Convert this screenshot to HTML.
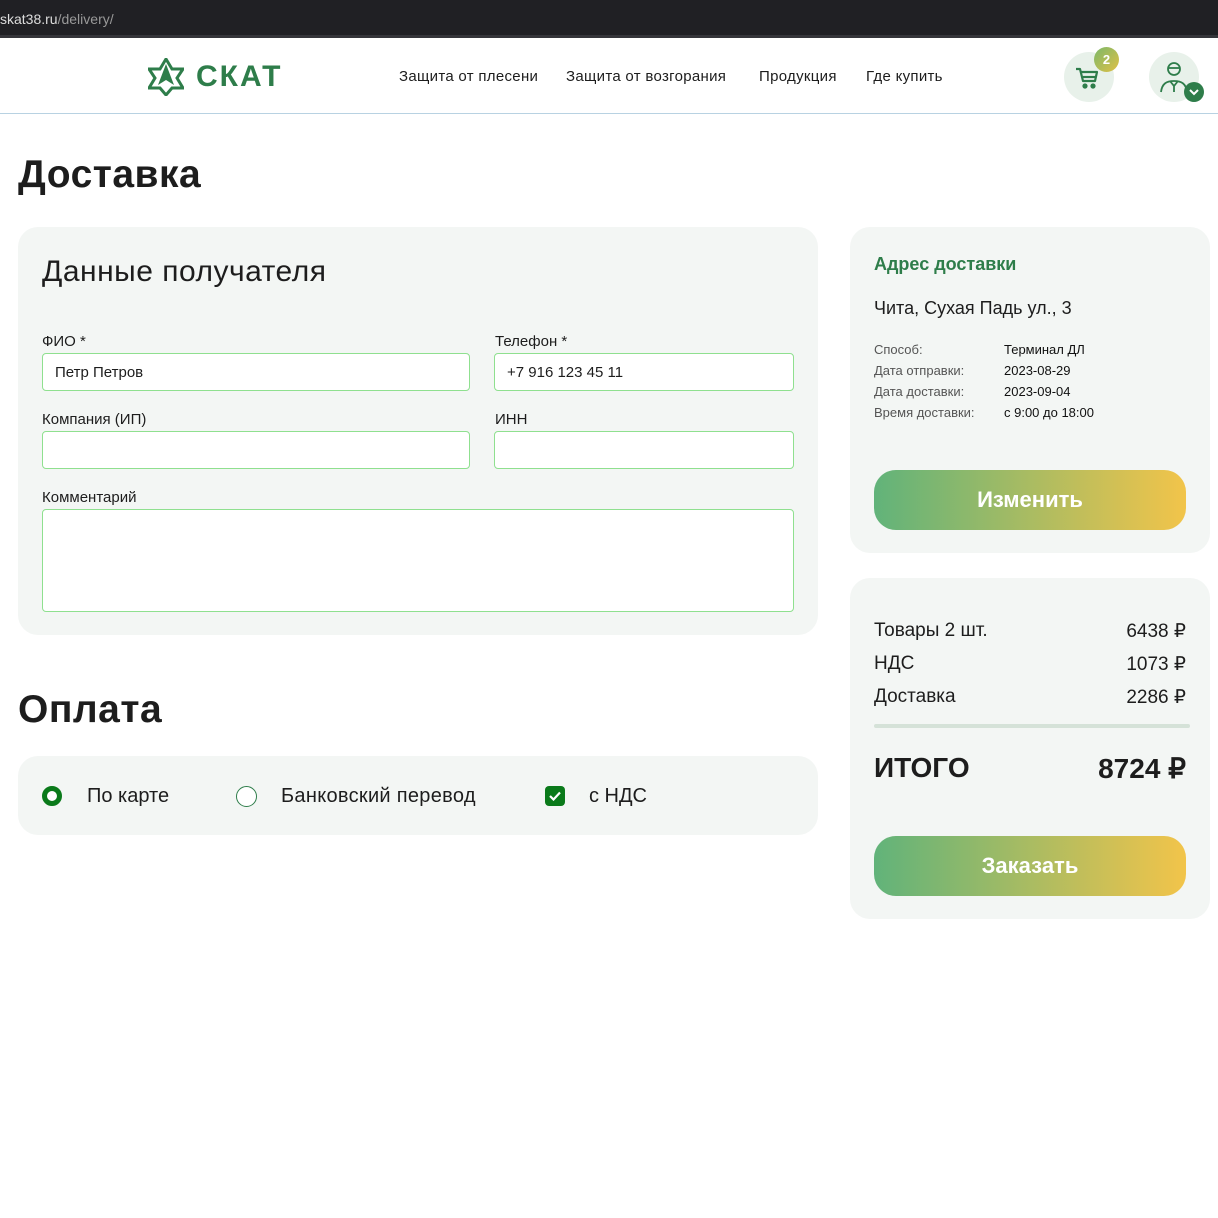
<!DOCTYPE html>
<html><head><meta charset="utf-8"><style>
*{box-sizing:border-box;margin:0;padding:0}
body{width:1218px;height:1218px;background:#fff;font-family:"Liberation Sans",sans-serif;color:#1d1d1d;position:relative;overflow:hidden}
.a{position:absolute}
.bar{left:0;top:0;width:1218px;height:38px;background:#202024;border-bottom:3px solid #35353a}
.card{background:#f3f6f4;border-radius:20px}
.inp{position:absolute;background:#fff;border:1px solid #8fe08f;border-radius:4px;font-size:15px;padding:10px 12px}
.lbl{position:absolute;font-size:15px}
.btn{position:absolute;left:874px;width:312px;height:60px;border-radius:22px;background:linear-gradient(90deg,#61b37a,#f2c44a);color:#fff;font-weight:bold;font-size:22px;text-align:center;line-height:60px}
.k{font-size:13px;color:#555}.v{font-size:13px;color:#111}
.row{position:absolute;left:874px;width:312px;font-size:19px;display:flex;justify-content:space-between}
</style></head><body>
<div class="a bar"></div>
<div class="a" style="left:0;top:11px;font-size:14px;color:#ddd">skat38.ru<span style="color:#999">/delivery/</span></div>
<div class="a" style="left:0;top:113px;width:1218px;height:1px;background:#b8d2e2"></div>
<svg class="a" style="left:148px;top:58px" width="36" height="38" viewBox="0 0 36 38"><path d="M18 1 L24 11 L35 11 L29 20 L35 30 L24 30 L18 37 L12 30 L1 30 L7 20 L1 11 L12 11 Z" fill="none" stroke="#2e7d4a" stroke-width="3"/><path d="M18 6 L26 27 L18 22 L10 27 Z" fill="#2e7d4a"/></svg>
<div class="a" style="left:196px;top:60px;font-size:30px;font-weight:bold;color:#2e7d4a;letter-spacing:2px">СКАТ</div>
<div class="a" style="left:399px;top:68px;font-size:15px;letter-spacing:0.3px">Защита от плесени</div>
<div class="a" style="left:566px;top:68px;font-size:15px;letter-spacing:0.3px">Защита от возгорания</div>
<div class="a" style="left:759px;top:68px;font-size:15px;letter-spacing:0.3px">Продукция</div>
<div class="a" style="left:866px;top:68px;font-size:15px;letter-spacing:0.3px">Где купить</div>
<div class="a" style="left:1064px;top:52px;width:50px;height:50px;border-radius:50%;background:#e8f1ea"></div>
<svg class="a" style="left:1075px;top:65px" width="26" height="26" viewBox="0 0 26 26" fill="none" stroke="#2e7d4a" stroke-width="2.2" stroke-linejoin="round"><path d="M1 4h4l3 12h12l2-9H6"/><path d="M8 12h13"/><circle cx="10" cy="21" r="1.5" fill="#2e7d4a"/><circle cx="18" cy="21" r="1.5" fill="#2e7d4a"/></svg>
<div class="a" style="left:1094px;top:47px;width:25px;height:25px;border-radius:50%;background:linear-gradient(135deg,#7cb86a,#e0c045);color:#fff;font-size:13px;font-weight:bold;text-align:center;line-height:25px">2</div>
<div class="a" style="left:1149px;top:52px;width:50px;height:50px;border-radius:50%;background:#e8f1ea"></div>
<svg class="a" style="left:1159px;top:60px" width="30" height="34" viewBox="0 0 30 34" fill="none" stroke="#2e7d4a" stroke-width="1.8"><circle cx="15" cy="9" r="6"/><path d="M9 8h12"/><path d="M2 32c1-8 5-11 13-11s12 3 13 11"/><path d="M11 21l4 5 4-5M15 26v6"/></svg>
<div class="a" style="left:1184px;top:82px;width:20px;height:20px;border-radius:50%;background:#2e7d4a"></div>
<svg class="a" style="left:1189px;top:88px" width="10" height="8" viewBox="0 0 10 8"><path d="M1 2l4 4 4-4" fill="none" stroke="#fff" stroke-width="2"/></svg>

<div class="a" style="left:18px;top:153px;font-size:39px;font-weight:bold;letter-spacing:0.5px">Доставка</div>
<div class="a card" style="left:18px;top:227px;width:800px;height:408px"></div>
<div class="a" style="left:42px;top:255px;font-size:30px;letter-spacing:0.5px">Данные получателя</div>
<div class="lbl" style="left:42px;top:333px">ФИО *</div>
<div class="lbl" style="left:495px;top:333px">Телефон *</div>
<div class="inp" style="left:42px;top:353px;width:428px;height:38px">Петр Петров</div>
<div class="inp" style="left:494px;top:353px;width:300px;height:38px">+7 916 123 45 11</div>
<div class="lbl" style="left:42px;top:411px">Компания (ИП)</div>
<div class="lbl" style="left:495px;top:411px">ИНН</div>
<div class="inp" style="left:42px;top:431px;width:428px;height:38px"></div>
<div class="inp" style="left:494px;top:431px;width:300px;height:38px"></div>
<div class="lbl" style="left:42px;top:489px">Комментарий</div>
<div class="inp" style="left:42px;top:509px;width:752px;height:103px"></div>

<div class="a" style="left:18px;top:688px;font-size:39px;font-weight:bold;letter-spacing:0.5px">Оплата</div>
<div class="a card" style="left:18px;top:756px;width:800px;height:79px"></div>
<div class="a" style="left:42px;top:786px;width:20px;height:20px;border-radius:50%;background:#fff;border:5px solid #0a7a1a"></div>
<div class="a" style="left:87px;top:785px;font-size:20px">По карте</div>
<div class="a" style="left:236px;top:786px;width:21px;height:21px;border-radius:50%;background:#fff;border:1px solid #2e7d4a"></div>
<div class="a" style="left:281px;top:785px;font-size:20px;letter-spacing:0.3px">Банковский перевод</div>
<div class="a" style="left:545px;top:786px;width:20px;height:20px;border-radius:4px;background:#0a7a1a"></div>
<svg class="a" style="left:549px;top:791px" width="12" height="10" viewBox="0 0 12 10"><path d="M1 5l3.5 3.5L11 1.5" fill="none" stroke="#fff" stroke-width="2.2"/></svg>
<div class="a" style="left:589px;top:785px;font-size:20px">с НДС</div>

<div class="a card" style="left:850px;top:227px;width:360px;height:326px"></div>
<div class="a" style="left:874px;top:254px;font-size:18px;font-weight:bold;color:#2e7d4a">Адрес доставки</div>
<div class="a" style="left:874px;top:298px;font-size:18px">Чита, Сухая Падь ул., 3</div>
<div class="a k" style="left:874px;top:342px">Способ:</div><div class="a v" style="left:1004px;top:342px">Терминал ДЛ</div>
<div class="a k" style="left:874px;top:363px">Дата отправки:</div><div class="a v" style="left:1004px;top:363px">2023-08-29</div>
<div class="a k" style="left:874px;top:384px">Дата доставки:</div><div class="a v" style="left:1004px;top:384px">2023-09-04</div>
<div class="a k" style="left:874px;top:405px">Время доставки:</div><div class="a v" style="left:1004px;top:405px">с 9:00 до 18:00</div>
<div class="btn" style="top:470px">Изменить</div>

<div class="a card" style="left:850px;top:578px;width:360px;height:341px"></div>
<div class="row" style="top:620px"><span>Товары 2 шт.</span><span>6438 ₽</span></div>
<div class="row" style="top:653px"><span>НДС</span><span>1073 ₽</span></div>
<div class="row" style="top:686px"><span>Доставка</span><span>2286 ₽</span></div>
<div class="a" style="left:874px;top:724px;width:316px;height:4px;background:#d5e2d8;border-radius:2px"></div>
<div class="row" style="top:752px;font-size:28px;font-weight:bold"><span>ИТОГО</span><span>8724 ₽</span></div>
<div class="btn" style="top:836px">Заказать</div>
</body></html>
